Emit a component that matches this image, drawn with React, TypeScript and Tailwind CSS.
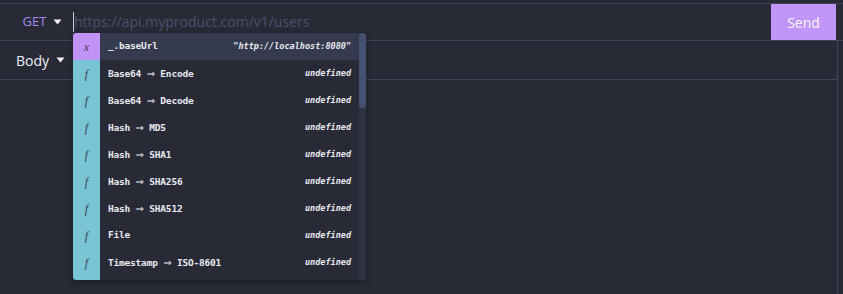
import React from 'react';

type Item = { kind: 'var' | 'fn'; label: string; value: string };

const items: Item[] = [
  { kind: 'var', label: '_.baseUrl', value: '"http://localhost:8080"' },
  { kind: 'fn', label: 'Base64 ⇒ Encode', value: 'undefined' },
  { kind: 'fn', label: 'Base64 ⇒ Decode', value: 'undefined' },
  { kind: 'fn', label: 'Hash ⇒ MD5', value: 'undefined' },
  { kind: 'fn', label: 'Hash ⇒ SHA1', value: 'undefined' },
  { kind: 'fn', label: 'Hash ⇒ SHA256', value: 'undefined' },
  { kind: 'fn', label: 'Hash ⇒ SHA512', value: 'undefined' },
  { kind: 'fn', label: 'File', value: 'undefined' },
  { kind: 'fn', label: 'Timestamp ⇒ ISO-8601', value: 'undefined' },
];

const Caret = () => (
  <svg width="9" height="6" viewBox="0 0 9 6" className="ml-[7px]" aria-hidden="true">
    <path d="M0.5 0.5h8L4.5 5.5z" fill="#f0f0f5" />
  </svg>
);

// renders the "⇒" in a face that has the glyph
const Label = ({ text }: { text: string }) => {
  const parts = text.split('⇒');
  return (
    <span className="text-[9.5px] font-bold text-[#e8eaf0] tracking-[-0.2px] whitespace-pre">
      {parts.map((p, i) => (
        <React.Fragment key={i}>
          {i > 0 && <span className="font-['DejaVu_Sans',sans-serif] font-normal text-[10px]">⇒</span>}
          {p}
        </React.Fragment>
      ))}
    </span>
  );
};

export default function App() {
  return (
    <div className="relative w-full h-[294px] overflow-hidden bg-[#282a36] pt-[3px] font-['Open_Sans',sans-serif]">
      <div className="border-t border-[#3e435a]">
        {/* URL bar */}
        <div className="flex h-[37px] border-b border-[#40465f]">
          <button className="w-[73px] flex items-center justify-center pl-[12px] text-[13px] text-[#a08bf6]">
            GET
            <Caret />
          </button>
          <div className="flex-1 flex items-center">
            <span className="w-px h-[20px] bg-[#c9cbd6]" />
            <span className="text-[14px] text-[#4a5170] leading-none">https://api.myproduct.com/v1/users</span>
          </div>
          <button className="w-[65px] mr-[7px] bg-[#c295f8] text-[14px] text-[#faf6ff]">Send</button>
        </div>

        {/* Body area */}
        <div className="flex">
          <div className="w-[838px] h-[260px] border-r border-[#40465f]">
            <div className="h-[39px] border-b border-[#40465f] flex items-center pl-[16px] text-[14px] text-[#eef0f5]">
              Body
              <Caret />
            </div>
          </div>
        </div>
      </div>

      {/* Autocomplete dropdown */}
      <div className="absolute left-[73px] top-[33px] w-[293px] h-[247px] flex rounded-[3px] overflow-hidden bg-[#282a36] shadow-[0_2px_6px_rgba(0,0,0,0.35)]">
        <div className="w-[286px] overflow-hidden">
          {items.map((it, i) => (
            <div
              key={it.label}
              className={`flex items-center h-[27px] ${i === 0 ? 'bg-[#353a4e]' : ''}`}>
              <div
                className={`w-[27px] h-full flex items-center justify-center font-['Liberation_Serif',serif] italic text-[12px] text-[#3b3f52] ${it.kind === 'var' ? 'bg-[#c293f7]' : 'bg-[#79c4d5]'}`}>
                {it.kind === 'var' ? 'x' : 'f'}
              </div>
              <div className="flex-1 flex items-center justify-between pl-[8px] pr-[8px] font-['DejaVu_Sans_Mono',monospace]">
                <Label text={it.label} />
                <span className="text-[8.5px] font-bold italic text-[#e8eaf0]">{it.value}</span>
              </div>
            </div>
          ))}
          {/* next row, scrolled out of view */}
          <div className="w-[27px] h-[10px] bg-[#79c4d5]" />
        </div>
        <div className="w-[7px] h-full bg-[#2f3243]">
          <div className="h-[75px] rounded-[3px] bg-[#465071]" />
        </div>
      </div>
    </div>
  );
}
